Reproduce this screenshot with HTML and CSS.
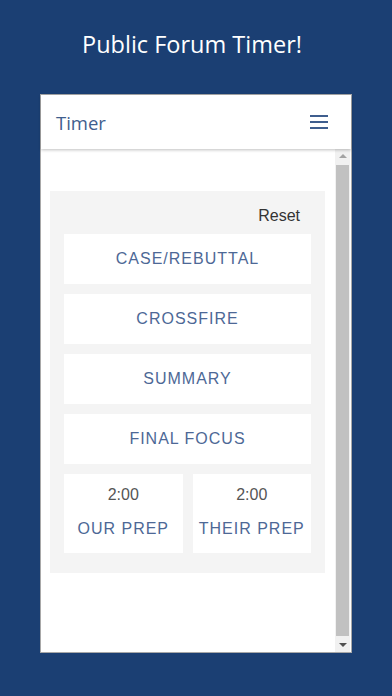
FILE: index.html
```
<!DOCTYPE html>
<html>
<head>
<meta charset="utf-8">
<link rel="stylesheet" href="styles.css">
</head>
<body>
<div class="screen">
  <h1 class="title">Public Forum Timer!</h1>
  <div class="card">
    <div class="header">
      <span class="header-title">Timer</span>
      <svg class="menu" width="18" height="14" viewBox="0 0 18 14"><rect x="0" y="0" width="18" height="2" fill="#3f5e8e"/><rect x="0" y="6" width="18" height="2" fill="#3f5e8e"/><rect x="0" y="12" width="18" height="2" fill="#3f5e8e"/></svg>
    </div>
    <div class="body">
      <div class="content">
        <div class="panel">
          <div class="reset">Reset</div>
          <div class="btn">CASE/REBUTTAL</div>
          <div class="btn">CROSSFIRE</div>
          <div class="btn">SUMMARY</div>
          <div class="btn">FINAL FOCUS</div>
          <div class="preps">
            <div class="prep"><div class="time">2:00</div><div class="prep-label">OUR PREP</div></div>
            <div class="prep"><div class="time">2:00</div><div class="prep-label">THEIR PREP</div></div>
          </div>
        </div>
      </div>
      <div class="scrollbar">
        <div class="arrow up"></div>
        <div class="thumb"></div>
        <div class="arrow down"></div>
      </div>
    </div>
  </div>
</div>
</body>
</html>
```
FILE: styles.css
```
html, body { margin: 0; padding: 0; }
body { background: #1b3f73; font-family: "Liberation Sans", Arial, sans-serif; }
.screen { width: 392px; height: 696px; display: flex; flex-direction: column; align-items: center; }
.title { margin: 28px 8px 0 0; height: 36px; line-height: 32px; font-family: "Open Sans", sans-serif; font-weight: 400; font-size: 23.5px; color: #fff; }
.card { margin-top: 30px; margin-left: 0; width: 310px; height: 557px; background: #fff; border: 1px solid #a8a8a8; display: flex; flex-direction: column; }
.header { height: 54px; flex: none; display: flex; align-items: center; justify-content: space-between; padding: 0 23px 0 15px; box-shadow: 0 1px 3px rgba(0,0,0,0.25); position: relative; z-index: 1; }
.header-title { font-family: "Open Sans", sans-serif; font-size: 18.5px; color: #3f5e8e; }
.menu { display: block; }
.body { flex: 1; display: flex; min-height: 0; }
.content { flex: 1; padding: 42px 10px 0 9px; }
.panel { background: #f4f4f4; padding: 14px 14px 20px 14px; display: flex; flex-direction: column; gap: 10px; }
.reset { text-align: right; font-size: 16px; color: #333; line-height: 20px; margin: 1px 11px -2px 0; }
.btn { height: 50px; background: #fff; display: flex; align-items: center; justify-content: center; color: #4d6896; font-size: 16px; letter-spacing: 1px; }
.preps { display: flex; gap: 10px; }
.prep { flex: 1; height: 79px; background: #fff; display: flex; flex-direction: column; align-items: center; }
.time { margin-top: 11px; font-size: 16px; color: #555; line-height: 20px; }
.prep-label { margin-top: 14px; font-size: 16px; color: #4d6896; letter-spacing: 1px; line-height: 20px; }
.scrollbar { width: 15px; flex: none; background: #f1f1f1; display: flex; flex-direction: column; align-items: center; margin-right: 1px; }
.arrow { width: 0; height: 0; border-left: 4px solid transparent; border-right: 4px solid transparent; margin: 5px 0; }
.arrow.up { border-bottom: 4px solid #a3a3a3; margin-top: 5px; }
.arrow.down { border-top: 4px solid #505050; margin-bottom: 5px; }
.thumb { flex: 1; width: 13px; background: #c1c1c1; margin: 2px 0; }
```
